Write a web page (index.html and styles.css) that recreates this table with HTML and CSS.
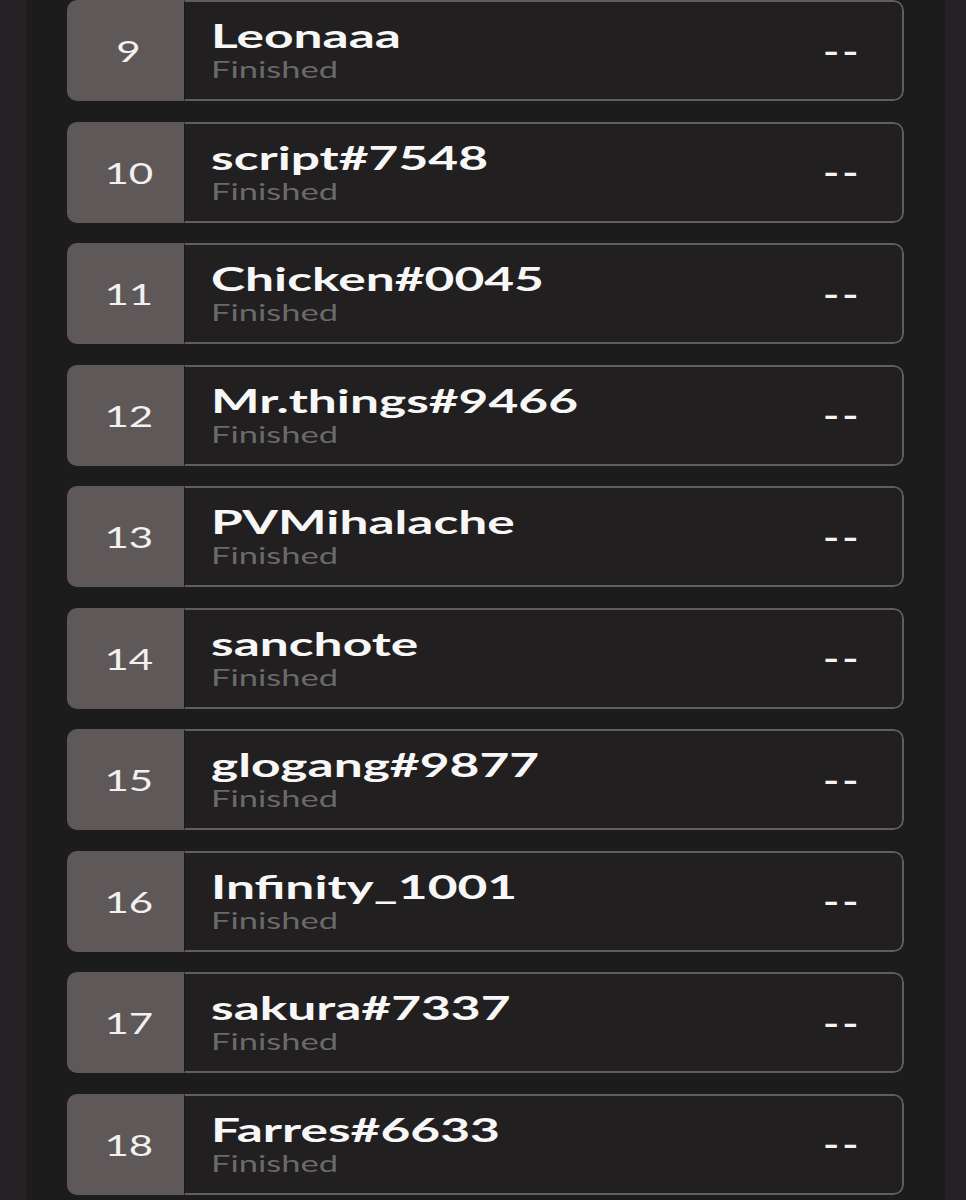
FILE: index.html
```html
<!DOCTYPE html>
<html>
<head>
<meta charset="utf-8">
<link rel="stylesheet" href="styles.css">
</head>
<body>
<div class="panel">
  <ul class="list">
    <li class="row"><div class="rank"><span class="wide">9</span></div><div class="main"><div class="info"><div class="name"><span class="wide-l">Leonaaa</span></div><div class="status"><span class="wide-s">Finished</span></div></div><div class="score">--</div></div></li>
    <li class="row"><div class="rank"><span class="wide">10</span></div><div class="main"><div class="info"><div class="name"><span class="wide-l">script#7548</span></div><div class="status"><span class="wide-s">Finished</span></div></div><div class="score">--</div></div></li>
    <li class="row"><div class="rank"><span class="wide">11</span></div><div class="main"><div class="info"><div class="name"><span class="wide-l">Chicken#0045</span></div><div class="status"><span class="wide-s">Finished</span></div></div><div class="score">--</div></div></li>
    <li class="row"><div class="rank"><span class="wide">12</span></div><div class="main"><div class="info"><div class="name"><span class="wide-l">Mr.things#9466</span></div><div class="status"><span class="wide-s">Finished</span></div></div><div class="score">--</div></div></li>
    <li class="row"><div class="rank"><span class="wide">13</span></div><div class="main"><div class="info"><div class="name"><span class="wide-l">PVMihalache</span></div><div class="status"><span class="wide-s">Finished</span></div></div><div class="score">--</div></div></li>
    <li class="row"><div class="rank"><span class="wide">14</span></div><div class="main"><div class="info"><div class="name"><span class="wide-l">sanchote</span></div><div class="status"><span class="wide-s">Finished</span></div></div><div class="score">--</div></div></li>
    <li class="row"><div class="rank"><span class="wide">15</span></div><div class="main"><div class="info"><div class="name"><span class="wide-l">glogang#9877</span></div><div class="status"><span class="wide-s">Finished</span></div></div><div class="score">--</div></div></li>
    <li class="row"><div class="rank"><span class="wide">16</span></div><div class="main"><div class="info"><div class="name"><span class="wide-l">Infinity_1001</span></div><div class="status"><span class="wide-s">Finished</span></div></div><div class="score">--</div></div></li>
    <li class="row"><div class="rank"><span class="wide">17</span></div><div class="main"><div class="info"><div class="name"><span class="wide-l">sakura#7337</span></div><div class="status"><span class="wide-s">Finished</span></div></div><div class="score">--</div></div></li>
    <li class="row"><div class="rank"><span class="wide">18</span></div><div class="main"><div class="info"><div class="name"><span class="wide-l">Farres#6633</span></div><div class="status"><span class="wide-s">Finished</span></div></div><div class="score">--</div></div></li>
  </ul>
</div>
</body>
</html>
```
FILE: styles.css
```css
html, body {
  margin: 0;
  padding: 0;
  background: #252124;
  font-family: Lato, "Open Sans", sans-serif;
  overflow: hidden;
}
.panel {
  margin: 0 21px 0 26px;
  background: #1d1c1c;
  height: 1200px;
  overflow: hidden;
}
.list {
  list-style: none;
  margin: 0;
  padding: 0 41px;
  display: flex;
  flex-direction: column;
  gap: 20.55px;
}
.row {
  display: flex;
  height: 101px;
  border-radius: 10px;
  overflow: hidden;
}
.rank {
  width: 117px;
  flex: none;
  box-sizing: border-box;
  padding-left: 6px;
  background: #5f5858;
  display: flex;
  align-items: center;
  justify-content: center;
  color: #f2f0f0;
  font-size: 29px;
  font-weight: 400;
}
.wide {
  display: inline-block;
  transform: scaleX(1.45);
}
.wide-l {
  display: inline-block;
  transform: scaleX(1.56);
  transform-origin: left center;
  white-space: nowrap;
}
.wide-s {
  display: inline-block;
  transform: scaleX(1.5);
  transform-origin: left center;
  white-space: nowrap;
}
.main {
  flex: 1;
  display: flex;
  align-items: center;
  background: #211f1f;
  border: 2px solid #5f5d5d;
  border-left: 1px solid #1a1919;
  border-radius: 0 10px 10px 0;
  padding: 0 41px 0 26px;
}
.info {
  flex: 1;
  align-self: flex-start;
  padding-top: 15px;
}
.name {
  color: #f7f7f7;
  font-size: 33px;
  font-weight: 700;
  line-height: 36px;
}
.status {
  margin-top: 3px;
  color: #6b6a6a;
  font-size: 23px;
  line-height: 26px;
}
.score {
  color: #f4f4f4;
  font-size: 30px;
  font-weight: 700;
  letter-spacing: 2px;
  transform: scaleX(1.45);
  transform-origin: right center;
}
```
